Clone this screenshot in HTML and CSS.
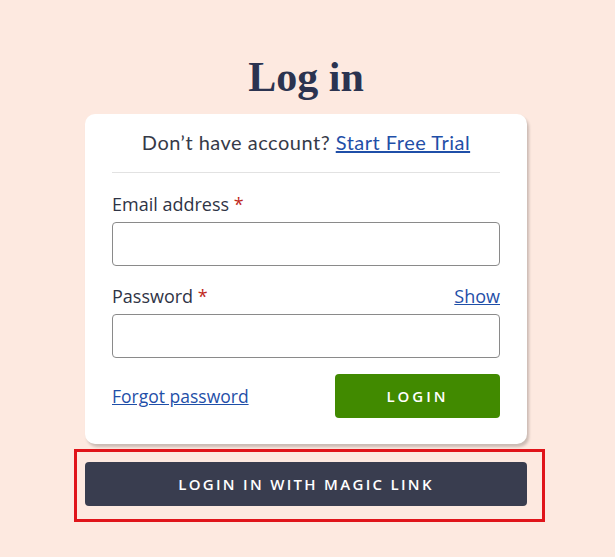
FILE: index.html
```html
<!DOCTYPE html>
<html lang="en">
<head>
<meta charset="utf-8"/>
<meta content="width=device-width, initial-scale=1.0" name="viewport"/>
<title>Log in</title>
<link rel="stylesheet" href="styles.css">
</head>
<body>
<main class="wrap">
<h1>Log in</h1>
<div class="card">
<p class="signup">Don’t have account? <a href="#">Start Free Trial</a></p>
<form class="login-form">
<div class="field">
<div class="field-head"><label for="email">Email address <span class="req">*</span></label></div>
<input id="email" type="email"/>
</div>
<div class="field">
<div class="field-head"><label for="password">Password <span class="req">*</span></label><a href="#" class="show">Show</a></div>
<input id="password" type="password"/>
</div>
<div class="actions">
<a href="#" class="forgot">Forgot password</a>
<button type="button" class="btn btn-green">LOGIN</button>
</div>
</form>
</div>
<div class="magic-box">
<button type="button" class="btn btn-dark">LOGIN IN WITH MAGIC LINK</button>
</div>
</main>
</body>
</html>
```

FILE: styles.css
```css
body { margin: 0; background: #fde9e0; color: #2f3445; font-family: "Open Sans", sans-serif; }
.wrap { width: 442px; margin: 0 88px 0 85px; padding-top: 52px; }
h1 { margin: 0 0 12px; text-align: center; font-family: "Liberation Serif", serif; font-size: 42px; line-height: 50px; font-weight: bold; color: #2b3350; }
.card { background: #fff; border-radius: 10px; padding: 0 27px 26px; box-shadow: 2px 3px 3px rgba(0, 0, 0, 0.2); }
.signup { margin: 0; padding: 14px 0 16px; text-align: center; font-family: Lato, sans-serif; font-size: 20px; line-height: 28px; letter-spacing: 0.5px; color: #363a48; border-bottom: 1px solid #e2e2e2; }
.signup a, .show, .forgot { color: #1f4fa8; }
.login-form { padding-top: 19px; }
.field { margin-bottom: 16px; }
.field + .field { padding-top: 2px; }
.field-head { display: flex; justify-content: space-between; align-items: flex-end; margin-bottom: 6px; }
.field-head label { font-size: 18px; line-height: 24px; }
.req { color: #c0281c; }
.show { font-size: 18px; line-height: 24px; }
input { display: block; box-sizing: border-box; width: 100%; height: 44px; border: 1px solid #8a8a8a; border-radius: 4px; font-size: 16px; }
.actions { display: flex; justify-content: space-between; align-items: center; }
.forgot { font-size: 17.5px; }
.btn { border: none; border-radius: 4px; height: 44px; color: #fff; font-family: "Open Sans", sans-serif; font-weight: 600; font-size: 15px; letter-spacing: 3px; cursor: pointer; }
.btn-green { width: 165px; background: #418a00; }
.magic-box { margin: 5px -18px 0 -11px; border: 3px solid #e0141a; padding: 10px 15px 13px 8px; }
.btn-dark { width: 100%; background: #393d4f; letter-spacing: 2.3px; }
```
